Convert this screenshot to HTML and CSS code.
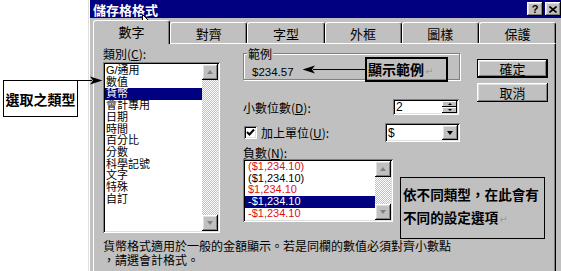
FILE: index.html
```html
<!DOCTYPE html>
<html lang="zh-Hant">
<head>
  <meta charset="UTF-8">
  <title>儲存格格式</title>
  <link rel="stylesheet" href="styles.css">
</head>
<body>

<div class="screen">
  <div class="side"></div>

  <div class="window">
    <div class="titlebar">
      <span class="title">儲存格格式</span>
      <div class="title-btns">
        <span class="tbtn">?</span>
        <span class="tbtn">
          <svg width="8" height="7" viewBox="0 0 8 7"><path d="M0.5 0.5 L7.5 6.5 M7.5 0.5 L0.5 6.5" stroke="#000" stroke-width="1.6"/></svg>
        </span>
      </div>
    </div>

    <div class="win-body">
      <div class="tabs">
        <div class="tab active">數字</div>
        <div class="tab">對齊</div>
        <div class="tab">字型</div>
        <div class="tab">外框</div>
        <div class="tab">圖樣</div>
        <div class="tab">保護</div>
      </div>

      <div class="panel">
        <div class="cols">
          <!-- 類別 -->
          <div class="col-left">
            <div class="label">類別(<u>C</u>):</div>
            <div class="listbox cat-list">
              <ul class="items">
                <li>G/通用</li>
                <li>數值</li>
                <li class="sel">貨幣</li>
                <li>會計專用</li>
                <li>日期</li>
                <li>時間</li>
                <li>百分比</li>
                <li>分數</li>
                <li>科學記號</li>
                <li>文字</li>
                <li>特殊</li>
                <li>自訂</li>
              </ul>
              <div class="scrollbar">
                <span class="sb-btn"><i class="tri-up"></i></span>
                <span class="sb-track"></span>
                <span class="sb-btn"><i class="tri-down"></i></span>
              </div>
            </div>
          </div>

          <!-- 設定 -->
          <div class="col-mid">
            <div class="group">
              <span class="group-title">範例</span>
              <span class="sample">$234.57</span>
            </div>

            <div class="row-dec">
              <span class="label">小數位數(<u>D</u>):</span>
              <div class="spin">
                <span class="field-text">2</span>
                <div class="spin-btns">
                  <span class="spin-btn"><i class="mini-up"></i></span>
                  <span class="spin-btn"><i class="mini-down"></i></span>
                </div>
              </div>
            </div>

            <div class="row-cur">
              <span class="checkbox">
                <svg width="9" height="9" viewBox="0 0 9 9"><path d="M1 4 L3.5 6.5 L8 1.5" fill="none" stroke="#000" stroke-width="2"/></svg>
              </span>
              <span class="label cb-label">加上單位(<u>U</u>):</span>
              <div class="dropdown">
                <span class="field-text">$</span>
                <span class="dd-btn"><i class="tri-down dark"></i></span>
              </div>
            </div>

            <div class="label label-neg">負數(<u>N</u>):</div>
            <div class="listbox neg-list">
              <ul class="items num">
                <li class="red">($1,234.10)</li>
                <li>($1,234.10)</li>
                <li class="red">$1,234.10</li>
                <li class="sel">-$1,234.10</li>
                <li class="red">-$1,234.10</li>
              </ul>
              <div class="scrollbar">
                <span class="sb-btn"><i class="tri-up"></i></span>
                <span class="sb-track"></span>
                <span class="sb-btn"><i class="tri-down"></i></span>
              </div>
            </div>
          </div>

          <!-- 按鈕 -->
          <div class="col-right">
            <div class="btn btn-ok">確定</div>
            <div class="btn btn-cancel">取消</div>
          </div>
        </div>

        <p class="desc">貨幣格式適用於一般的金額顯示。若是同欄的數值必須對齊小數點<br>，請選會計格式。</p>
      </div>
    </div>
  </div>
</div>

<!-- 說明標註 -->
<div class="note note-type">選取之類型</div>
<svg class="arrow arrow-type" width="27" height="9" viewBox="0 0 27 9">
  <line x1="0" y1="4.5" x2="16" y2="4.5" stroke="#000"/>
  <polygon points="14,0.5 26.5,4.5 14,8.5 17,4.5" fill="#000"/>
</svg>

<div class="note note-sample">顯示範例<span class="mark">↵</span></div>
<svg class="arrow arrow-sample" width="64" height="9" viewBox="0 0 64 9">
  <line x1="11" y1="4.5" x2="64" y2="4.5" stroke="#000"/>
  <polygon points="0.5,4.5 13,0.5 10,4.5 13,8.5" fill="#000"/>
</svg>

<div class="note note-options">依不同類型，在此會有<br>不同的設定選項<span class="mark">↵</span></div>

<svg class="cursor" width="13" height="21" viewBox="0 0 13 21">
  <path d="M0.5 0.5 V16.5 L4.5 12.8 L7.2 19.5 L9.8 18.4 L7.2 11.8 H12 Z" fill="#fff" stroke="#000" stroke-linejoin="miter"/>
</svg>

</body>
</html>
```

FILE: styles.css
```css
* {
  box-sizing: border-box;
}

body {
  margin: 0;
  width: 561px;
  height: 271px;
  overflow: hidden;
  position: relative;
  background: #fff;
  font-family: "Liberation Sans", "Noto Sans CJK TC", sans-serif;
  color: #000;
}

.screen {
  display: flex;
  height: 271px;
}

.side {
  width: 88px;
  flex: none;
}

/* 視窗 */
.window {
  width: 478px;
  flex: none;
  background: #c0c0c0;
  padding: 0 3px 0 2px;
  box-shadow: inset 1px 0 #dfdfdf, inset 2px 0 #fff;
}

.titlebar {
  height: 18px;
  background: #000080;
  color: #fff;
  display: flex;
  align-items: center;
  padding: 0 2px 0 3px;
  font: bold 13px "Noto Sans CJK TC", sans-serif;
}

.title-btns {
  margin-left: auto;
  display: flex;
  gap: 2px;
}

.tbtn {
  width: 16px;
  height: 14px;
  background: #c0c0c0;
  color: #000;
  display: flex;
  align-items: center;
  justify-content: center;
  font: bold 11px "Liberation Sans", sans-serif;
  box-shadow: inset -1px -1px #000, inset 1px 1px #fff, inset -2px -2px #808080, inset 2px 2px #dfdfdf;
}

.win-body {
  padding: 2px 7px 0 3px;
}

/* 頁籤 */
.tabs {
  display: flex;
  height: 23px;
}

.tab {
  flex: 1;
  margin-top: 2px;
  height: 21px;
  border-top: 1px solid #fff;
  border-left: 1px solid #fff;
  border-right: 1px solid #000;
  border-radius: 3px 3px 0 0;
  box-shadow: inset -1px 0 #808080;
  display: flex;
  align-items: center;
  justify-content: center;
  font: 13px "Noto Sans CJK TC", sans-serif;
}

.tab.active {
  margin-top: 0;
  height: 24px;
  padding-bottom: 2px;
  background: #c0c0c0;
  position: relative;
  z-index: 2;
}

.panel {
  height: 232px;
  background: #c0c0c0;
  border-top: 1px solid #fff;
  border-left: 1px solid #fff;
  border-right: 1px solid #000;
  box-shadow: inset -1px 0 #808080;
  padding: 3px 0 0 9px;
}

.cols {
  display: flex;
}

.label {
  font: 12px "Noto Sans CJK TC", sans-serif;
  line-height: 13px;
  height: 13px;
  white-space: nowrap;
}

.col-left {
  width: 117px;
  flex: none;
}

.col-mid {
  width: 217px;
  flex: none;
  margin-left: 23px;
}

.col-right {
  width: 71px;
  flex: none;
  margin-left: 17px;
}

/* 清單 */
.listbox {
  display: flex;
  padding: 2px;
  background: #fff;
  box-shadow: inset 1px 1px #808080, inset -1px -1px #fff, inset 2px 2px #000, inset -2px -2px #dfdfdf;
}

.cat-list {
  margin-top: 2px;
  height: 171px;
}

.items {
  flex: 1;
  list-style: none;
  margin: 0;
  padding: 1px 0 0 0;
  font: 11px "Liberation Sans", "Noto Sans CJK TC", sans-serif;
  line-height: 11.7px;
  overflow: hidden;
}

.items li {
  padding-left: 1px;
  white-space: nowrap;
}

.items li.sel {
  background: #000080;
  color: #fff;
}

.items.num {
  padding-top: 0;
}

.items.num li {
  padding-left: 3px;
}

.items li.red {
  color: #dd1111;
}

.scrollbar {
  width: 16px;
  flex: none;
  display: flex;
  flex-direction: column;
}

.sb-btn {
  width: 16px;
  height: 16px;
  flex: none;
  background: #c0c0c0;
  display: flex;
  align-items: center;
  justify-content: center;
  box-shadow: inset -1px -1px #000, inset 1px 1px #fff, inset -2px -2px #808080, inset 2px 2px #dfdfdf;
}

.sb-track {
  flex: 1;
  background: repeating-conic-gradient(#c0c0c0 0 25%, #fff 0 50%) 0 0 / 2px 2px;
}

.tri-up,
.tri-down {
  width: 0;
  height: 0;
  border-left: 3.5px solid transparent;
  border-right: 3.5px solid transparent;
}

.tri-up {
  border-bottom: 4px solid #808080;
}

.tri-down {
  border-top: 4px solid #808080;
}

.tri-down.dark {
  border-top-color: #000;
}

/* 範例 */
.group {
  position: relative;
  margin-top: 6px;
  height: 27px;
  border: 1px solid #808080;
  box-shadow: inset 1px 1px #fff, 1px 1px #fff;
  padding: 8px 0 0 8px;
}

.group-title {
  position: absolute;
  top: -7px;
  left: 3px;
  padding: 0 1px;
  background: #c0c0c0;
  font: 12px "Noto Sans CJK TC", sans-serif;
  line-height: 13px;
}

.sample {
  font-size: 11.5px;
  line-height: 13px;
}

.row-dec {
  margin-top: 19px;
  height: 16px;
  display: flex;
  align-items: center;
  justify-content: space-between;
}

.spin {
  width: 66px;
  height: 16px;
  margin-right: 1px;
  display: flex;
  padding: 2px;
  background: #fff;
  box-shadow: inset 1px 1px #808080, inset -1px -1px #fff, inset 2px 2px #000, inset -2px -2px #dfdfdf;
}

.field-text {
  flex: 1;
  padding-left: 1px;
  font-size: 12px;
  line-height: 12px;
}

.spin-btns {
  width: 15px;
  display: flex;
  flex-direction: column;
}

.spin-btn {
  flex: 1;
  background: #c0c0c0;
  display: flex;
  align-items: center;
  justify-content: center;
  box-shadow: inset -1px -1px #000, inset 1px 1px #fff;
}

.mini-up,
.mini-down {
  width: 0;
  height: 0;
  border-left: 2.5px solid transparent;
  border-right: 2.5px solid transparent;
}

.mini-up {
  border-bottom: 2px solid #000;
}

.mini-down {
  border-top: 2px solid #000;
}

.row-cur {
  margin-top: 8px;
  height: 19px;
  display: flex;
  align-items: center;
}

.checkbox {
  width: 13px;
  height: 13px;
  margin-left: 1px;
  display: flex;
  align-items: center;
  justify-content: center;
  background: #fff;
  box-shadow: inset 1px 1px #808080, inset -1px -1px #fff, inset 2px 2px #000, inset -2px -2px #dfdfdf;
}

.cb-label {
  margin-left: 4px;
}

.dropdown {
  margin-left: auto;
  width: 75px;
  height: 19px;
  display: flex;
  align-items: center;
  padding: 2px;
  background: #fff;
  box-shadow: inset 1px 1px #808080, inset -1px -1px #fff, inset 2px 2px #000, inset -2px -2px #dfdfdf;
}

.dd-btn {
  width: 16px;
  height: 15px;
  background: #c0c0c0;
  display: flex;
  align-items: center;
  justify-content: center;
  box-shadow: inset -1px -1px #000, inset 1px 1px #fff, inset -2px -2px #808080, inset 2px 2px #dfdfdf;
}

.label-neg {
  margin-top: 4px;
}

.neg-list {
  width: 150px;
  height: 63px;
}

/* 按鈕 */
.btn {
  height: 19px;
  display: flex;
  align-items: center;
  justify-content: center;
  background: #c0c0c0;
  font: 13px "Noto Sans CJK TC", sans-serif;
  box-shadow: inset -1px -1px #000, inset 1px 1px #fff, inset -2px -2px #808080, inset 2px 2px #dfdfdf;
}

.btn-ok {
  margin-top: 12px;
  border: 1px solid #000;
}

.btn-cancel {
  margin-top: 5px;
}

.desc {
  margin: 7px 0 0 0;
  font: 12px "Liberation Sans", "Noto Sans CJK TC", sans-serif;
  line-height: 14px;
  white-space: nowrap;
}

/* 標註 */
.note {
  position: absolute;
  font: bold 14px "Noto Sans CJK TC", sans-serif;
  color: #000;
}

.note .mark {
  font: 10px "DejaVu Sans", sans-serif;
  color: #9a9a9a;
  margin-left: 1px;
}

.note-type {
  left: 3px;
  top: 80px;
  width: 75px;
  height: 37px;
  border: 1px solid #000;
  background: #fff;
  display: flex;
  align-items: center;
  justify-content: center;
  line-height: 14px;
}

.note-sample {
  left: 365px;
  top: 57px;
  width: 83px;
  height: 25px;
  border: 2px solid #000;
  padding-left: 1px;
  line-height: 21px;
}

.note-options {
  left: 400px;
  top: 177px;
  width: 145px;
  height: 62px;
  border: 1px solid #000;
  padding: 5px 0 0 2px;
  font-size: 13.6px;
  line-height: 23px;
  white-space: nowrap;
}

.arrow {
  position: absolute;
}

.arrow-type {
  left: 76px;
  top: 76px;
}

.arrow-sample {
  left: 302px;
  top: 65px;
}

.cursor {
  position: absolute;
  left: 142px;
  top: 14px;
}
```
